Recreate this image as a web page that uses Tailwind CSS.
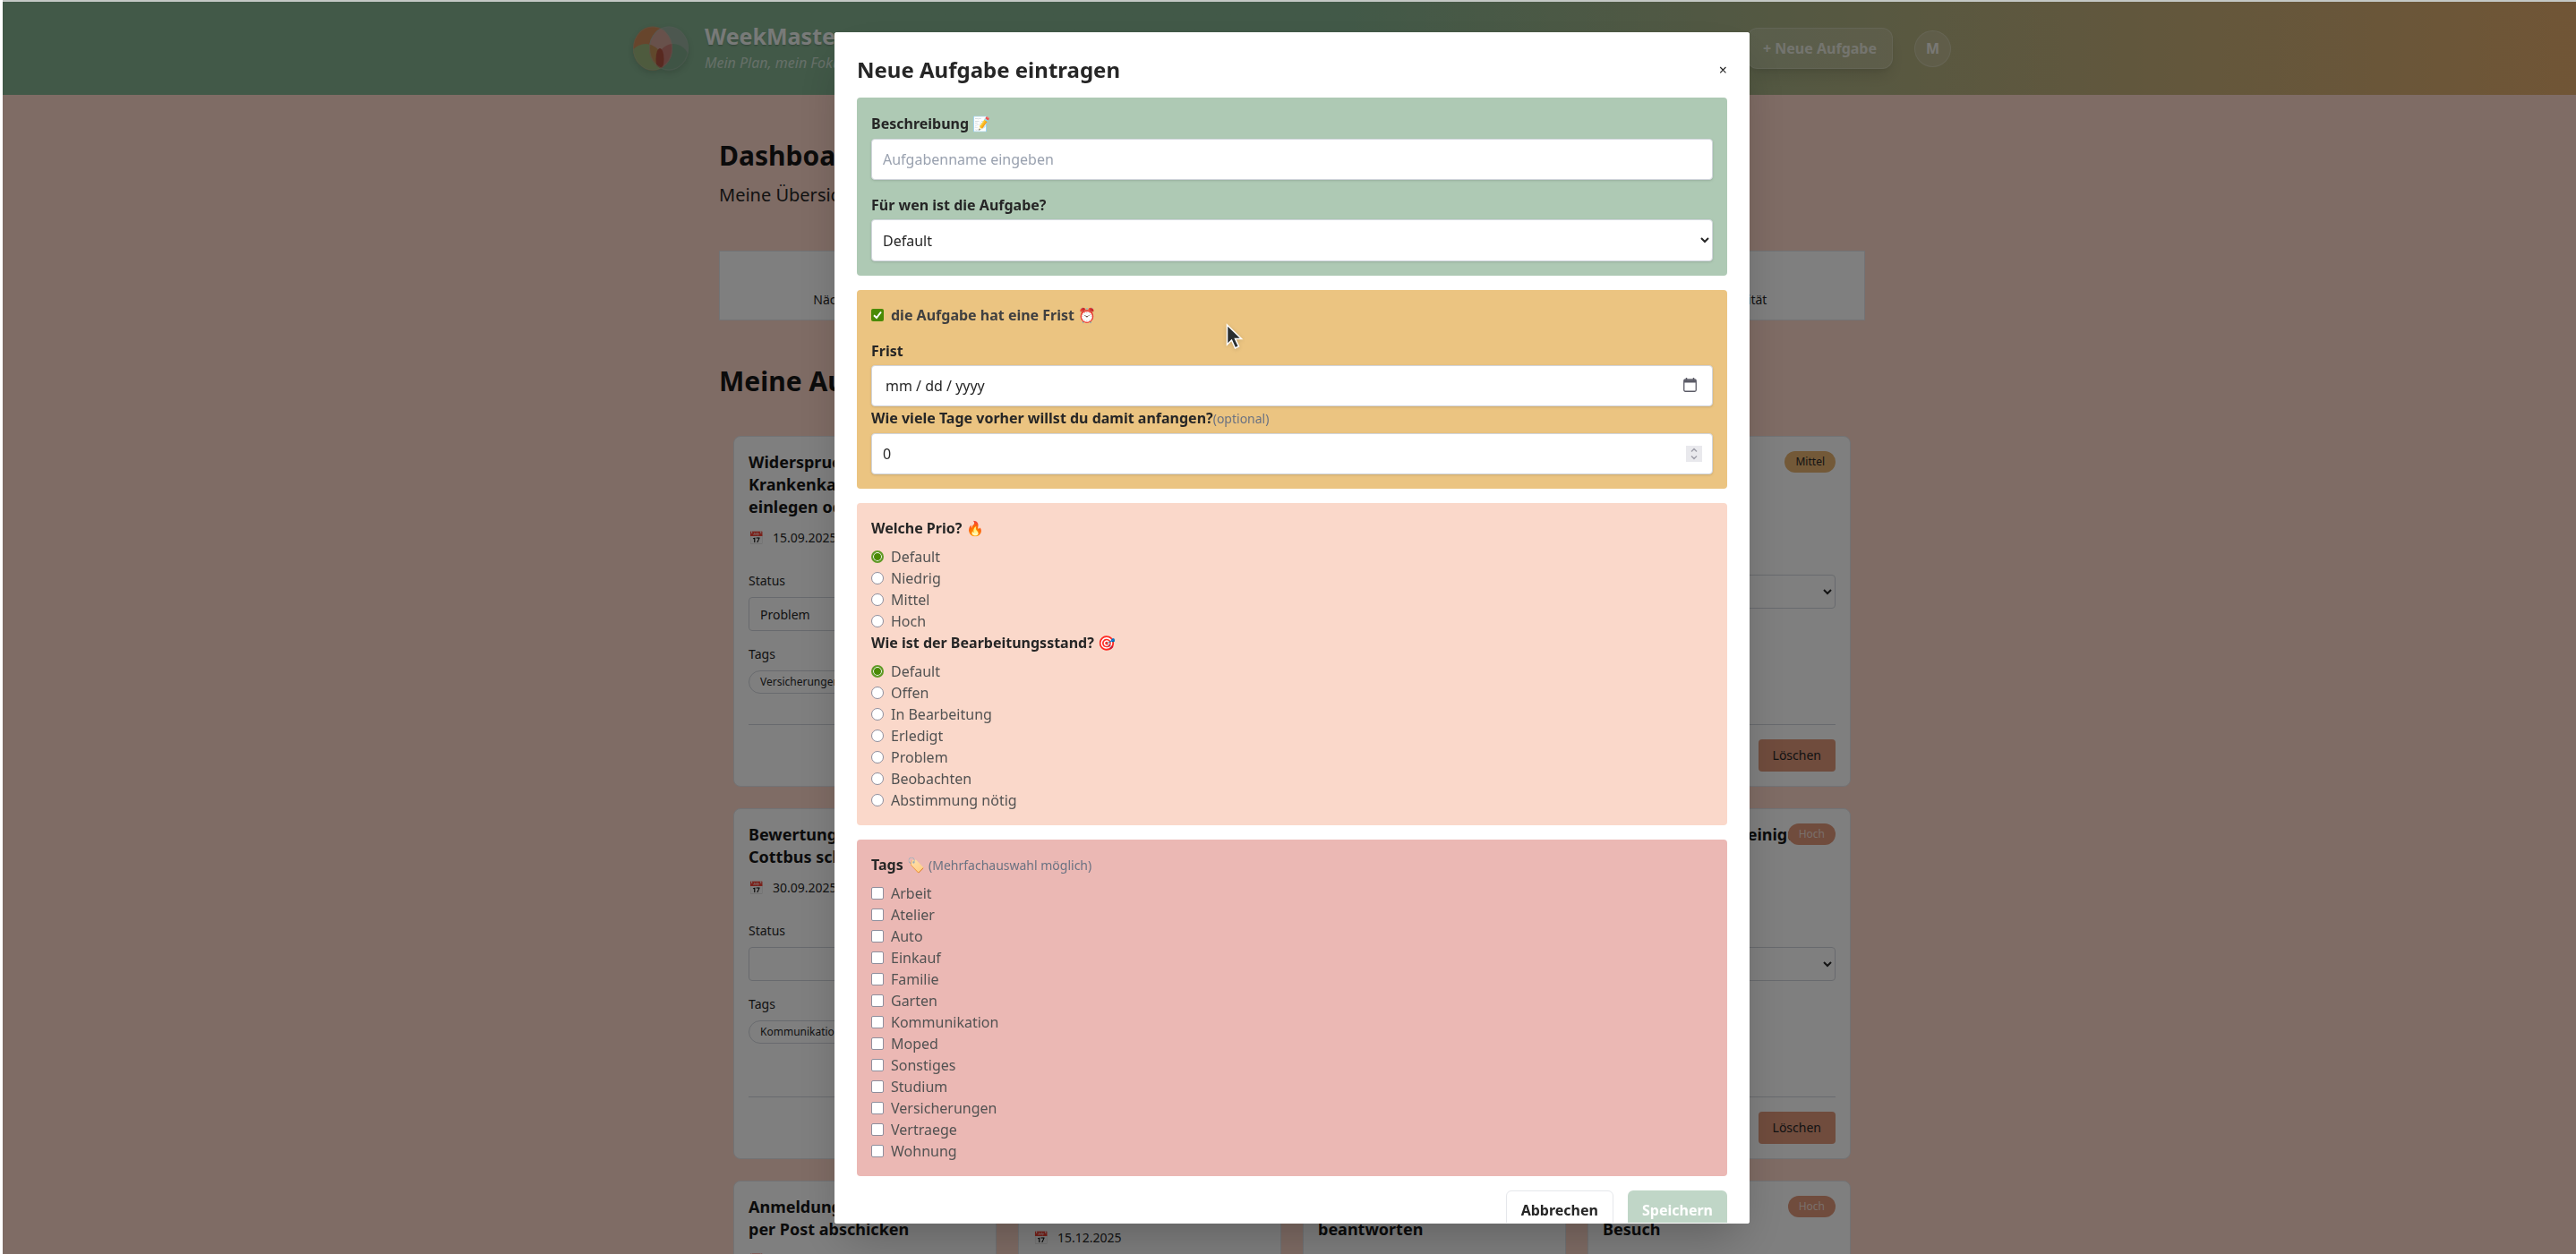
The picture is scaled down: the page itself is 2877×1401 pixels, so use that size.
<!DOCTYPE html>
<html lang="de">
<head>
<meta charset="utf-8">
<title>WeekMaster</title>
<script src="https://cdn.jsdelivr.net/npm/@tailwindcss/browser@4"></script>
</head>
<body class="h-screen overflow-hidden bg-white font-['Noto_Sans',sans-serif] text-base text-neutral-800">
<div class="ml-[3px] -mr-[6px] h-screen overflow-hidden border-t-2 border-[#c4c8c5] bg-[#fed8ca]">
  <header class="h-[104px] bg-linear-to-r from-[#84b290] from-52% to-[#e2ab6c]">
    <div class="mx-auto flex h-full max-w-[1536px] items-center justify-between px-8">
      <a href="#" class="flex items-center gap-[18px]">
        <svg class="h-[50px] w-[62px] drop-shadow-md" viewBox="0 0 62 50" aria-hidden="true">
          <defs>
            <clipPath id="l"><ellipse cx="22" cy="25" rx="22" ry="24.500"/></clipPath>
            <clipPath id="r"><ellipse cx="40" cy="25" rx="22" ry="24.500"/></clipPath>
          </defs>
          <g clip-path="url(#l)">
            <rect width="62" height="50" fill="#cf8a58"/>
            <ellipse cx="14" cy="42" rx="20" ry="22" fill="#9cb67c"/>
          </g>
          <g clip-path="url(#r)">
            <rect width="62" height="50" fill="#98ae9e"/>
            <ellipse cx="45" cy="42" rx="19" ry="22" fill="#7fa88a"/>
            <g clip-path="url(#l)">
              <rect width="62" height="50" fill="#d0a296"/>
              <ellipse cx="14" cy="42" rx="20" ry="22" fill="#c29058"/>
              <ellipse cx="45" cy="42" rx="19" ry="22" fill="#c67c74"/>
              <ellipse cx="30" cy="37" rx="4.500" ry="12" fill="#b15240"/>
            </g>
          </g>
          <ellipse cx="22" cy="25" rx="21.500" ry="24" fill="none" stroke="#a4b8a8" stroke-opacity=".4"/>
          <ellipse cx="40" cy="25" rx="21.500" ry="24" fill="none" stroke="#a4b8a8" stroke-opacity=".5"/>
        </svg>
        <span class="block">
          <span class="block text-[25px] leading-8 font-bold text-white/90 text-shadow-sm">WeekMaster</span>
          <span class="block text-base leading-7 text-white/60 italic">Mein Plan, mein Fokus</span>
        </span>
      </a>
      <div class="flex items-center gap-6">
        <button class="h-[46px] rounded-xl border border-white/20 bg-white/15 px-[17px] font-bold text-white/70 shadow-lg">+ Neue Aufgabe</button>
        <button class="size-[41px] rounded-full border border-white/20 bg-white/15 font-bold text-white/80">M</button>
      </div>
    </div>
  </header>

  <main class="mx-auto max-w-[1280px] pt-[50px]">
    <h1 class="text-3xl leading-9 font-bold text-neutral-900">Dashboard</h1>
    <p class="mt-3 text-xl leading-7">Meine Übersicht</p>
    <div class="mt-12 grid h-[78px] grid-cols-4 items-end border border-gray-200 bg-white pb-3 text-center text-sm">
      <p>Nächste Termine</p><p>Offen</p><p>In Bearbeitung</p><p>Offene Priorität</p>
    </div>
    <h2 class="mt-[50px] text-3xl leading-9 font-bold text-neutral-900">Meine Aufgaben</h2>
    <div class="mt-[27px] grid auto-rows-[392px] grid-cols-4 gap-6 p-4 text-sm leading-5">
      <article class="flex flex-col rounded-lg border border-gray-200 bg-white p-4">
        <h3 class="text-lg leading-[25px] font-bold text-neutral-900">Widerspruch bei<br>Krankenkasse<br>einlegen oder</h3>
        <p class="mt-3 flex gap-[10px]"><span>📅</span>15.09.2025</p>
        <label for="s1" class="mt-7">Status</label>
        <select id="s1" class="mt-2 h-[38px] shrink-0 rounded border border-gray-300 px-2"><option>Problem</option></select>
        <p class="mt-4">Tags</p>
        <p class="mt-2 h-[26px] self-start rounded-full border border-gray-300 px-3 text-xs leading-6">Versicherungen</p>
        <div class="mt-auto flex justify-end border-t border-gray-300 pt-4"><button class="h-9 rounded bg-[#e0987a] px-4">Löschen</button></div>
      </article>
      <article class="rounded-lg border border-gray-200 bg-white p-4"></article>
      <article class="rounded-lg border border-gray-200 bg-white p-4"></article>
      <article class="relative flex flex-col rounded-lg border border-gray-200 bg-white p-4">
        <span class="absolute top-4 right-4 h-6 rounded-full bg-[#e6b270] px-3 text-xs leading-6">Mittel</span>
        <h3 class="text-lg leading-[25px] font-bold text-neutral-900">Auto<br>Service</h3>
        <p class="mt-3">📅</p>
        <label for="s2" class="mt-7">Status</label>
        <select id="s2" class="mt-2 h-[38px] shrink-0 rounded border border-gray-300 px-2"><option></option></select>
        <div class="mt-auto flex justify-end border-t border-gray-300 pt-4"><button class="h-9 rounded bg-[#e0987a] px-4">Löschen</button></div>
      </article>

      <article class="flex flex-col rounded-lg border border-gray-200 bg-white p-4">
        <h3 class="text-lg leading-[25px] font-bold text-neutral-900">Bewertung<br>Cottbus schreiben</h3>
        <p class="mt-3 flex gap-[10px]"><span>📅</span>30.09.2025</p>
        <label for="s3" class="mt-7">Status</label>
        <select id="s3" class="mt-2 h-[38px] shrink-0 rounded border border-gray-300 px-2"><option></option></select>
        <p class="mt-4">Tags</p>
        <p class="mt-2 h-[26px] self-start rounded-full border border-gray-300 px-3 text-xs leading-6">Kommunikation</p>
        <div class="mt-auto flex justify-end border-t border-gray-300 pt-4"><button class="h-9 rounded bg-[#e0987a] px-4">Löschen</button></div>
      </article>
      <article class="rounded-lg border border-gray-200 bg-white p-4"></article>
      <article class="rounded-lg border border-gray-200 bg-white p-4"></article>
      <article class="relative flex flex-col rounded-lg border border-gray-200 bg-white p-4">
        <span class="absolute top-4 right-4 h-6 rounded-full bg-[#e0987a] px-3 text-xs leading-6 text-white/70">Hoch</span>
        <h3 class="text-lg leading-[25px] font-bold whitespace-nowrap text-neutral-900">Termine für Zahnreinigu<br>planen</h3>
        <p class="mt-3">📅</p>
        <label for="s4" class="mt-7">Status</label>
        <select id="s4" class="mt-2 h-[38px] shrink-0 rounded border border-gray-300 px-2"><option></option></select>
        <div class="mt-auto flex justify-end border-t border-gray-300 pt-4"><button class="h-9 rounded bg-[#e0987a] px-4">Löschen</button></div>
      </article>

      <article class="rounded-lg border border-gray-200 bg-white p-4">
        <h3 class="text-lg leading-[25px] font-bold text-neutral-900">Anmeldung<br>per Post abschicken</h3>
        <p class="mt-3 flex gap-[10px]"><span>📅</span></p>
      </article>
      <article class="rounded-lg border border-gray-200 bg-white p-4">
        <h3 class="text-lg leading-[25px] font-bold text-neutral-900">Steuer</h3>
        <p class="mt-3 flex gap-[10px]"><span>📅</span>15.12.2025</p>
      </article>
      <article class="rounded-lg border border-gray-200 bg-white p-4">
        <h3 class="text-lg leading-[25px] font-bold text-neutral-900">Brief<br>beantworten</h3>
      </article>
      <article class="relative rounded-lg border border-gray-200 bg-white p-4">
        <span class="absolute top-4 right-4 h-6 rounded-full bg-[#e0987a] px-3 text-xs leading-6 text-white/70">Hoch</span>
        <h3 class="text-lg leading-[25px] font-bold text-neutral-900">Arzt<br>Besuch</h3>
      </article>
    </div>
  </main>
</div>

<div class="fixed top-[2px] -right-[6px] bottom-0 left-[3px] flex items-center justify-center bg-black/50">
  <div role="dialog" aria-labelledby="dlg" class="h-[95vh] w-full max-w-[1022px] overflow-hidden rounded-xs border border-white bg-white p-6 shadow-2xl">
    <div class="mt-px flex items-center justify-between">
      <h2 id="dlg" class="text-2xl leading-8 font-bold">Neue Aufgabe eintragen</h2>
      <button aria-label="Schließen">×</button>
    </div>
    <form class="mt-[15px] flex flex-col gap-4">
      <section class="flex flex-col rounded bg-[#aec9b4] p-4">
        <label for="name" class="leading-[26px] font-bold">Beschreibung 📝</label>
        <input id="name" type="text" placeholder="Aufgabenname eingeben" class="mt-1 h-[46px] rounded border border-gray-300 bg-white px-3 shadow-sm placeholder:text-gray-400">
        <label for="who" class="mt-4 font-bold">Für wen ist die Aufgabe?</label>
        <select id="who" class="mt-1 h-[47px] rounded border border-gray-300 bg-white px-2 shadow-sm"><option>Default</option></select>
      </section>

      <section class="flex flex-col rounded bg-[#ebc481] p-4">
        <label class="relative flex items-center gap-2 font-bold text-neutral-700">
          <input type="checkbox" checked class="size-[14px] appearance-none rounded-xs bg-[#4a8a05]">
          <svg class="absolute left-0 size-[14px]" viewBox="0 0 14 14" fill="none" stroke="#fff" stroke-width="2"><path d="M3 7.300 6 10l5-6.500"/></svg>
          die Aufgabe hat eine Frist ⏰
        </label>
        <label for="date" class="mt-4 font-bold">Frist</label>
        <div class="relative mt-1 flex">
          <input id="date" type="text" placeholder="mm / dd / yyyy" class="h-[46px] w-full rounded border border-gray-300 bg-white px-[15px] shadow-sm placeholder:text-neutral-800">
          <button type="button" aria-label="Kalender" class="absolute top-[14px] right-[18px]">
            <svg class="h-4 w-[15px]" viewBox="0 0 15 16" fill="none" stroke="#5b5b66"><path d="M3.500 0v3M11.500 0v3" stroke-width="1.500"/><rect x=".75" y="2" width="13.500" height="13.250" rx="1.500" stroke-width="1.300"/><path d="M1 4h13" stroke-width="3"/></svg>
          </button>
        </div>
        <label for="days" class="mt-px font-bold">Wie viele Tage vorher willst du damit anfangen?<span class="text-sm font-normal text-gray-500">(optional)</span></label>
        <div class="relative mt-[5px] flex">
          <input id="days" type="text" inputmode="numeric" value="0" class="h-[46px] w-full rounded border border-gray-300 bg-white px-3 shadow-sm">
          <span class="absolute top-[14px] right-3 flex h-[18px] w-[18px] items-center justify-center bg-[#e9e9ed]">
            <svg class="h-[14px] w-2" viewBox="0 0 8 14" fill="none" stroke="#a0a0aa" stroke-width="1.500"><path d="M1 4.500 4 1.500l3 3M1 9.500l3 3 3-3"/></svg>
          </span>
        </div>
      </section>

      <section class="rounded bg-[#fad8ca] p-4 text-neutral-600">
        <fieldset>
          <legend class="mb-2 font-bold text-neutral-800">Welche Prio? 🔥</legend>
          <label class="flex items-center gap-2"><input type="radio" name="prio" checked class="size-[14px] appearance-none rounded-full border-2 border-[#5f9a26] bg-[#4a8a05] inset-shadow-[0_0_0_1px_#fff]">Default</label>
          <label class="flex items-center gap-2"><input type="radio" name="prio" class="size-[14px] appearance-none rounded-full border border-[#8f8f9d] bg-white">Niedrig</label>
          <label class="flex items-center gap-2"><input type="radio" name="prio" class="size-[14px] appearance-none rounded-full border border-[#8f8f9d] bg-white">Mittel</label>
          <label class="flex items-center gap-2"><input type="radio" name="prio" class="size-[14px] appearance-none rounded-full border border-[#8f8f9d] bg-white">Hoch</label>
        </fieldset>
        <fieldset>
          <legend class="mb-2 font-bold text-neutral-800">Wie ist der Bearbeitungsstand? 🎯</legend>
          <label class="flex items-center gap-2"><input type="radio" name="stand" checked class="size-[14px] appearance-none rounded-full border-2 border-[#5f9a26] bg-[#4a8a05] inset-shadow-[0_0_0_1px_#fff]">Default</label>
          <label class="flex items-center gap-2"><input type="radio" name="stand" class="size-[14px] appearance-none rounded-full border border-[#8f8f9d] bg-white">Offen</label>
          <label class="flex items-center gap-2"><input type="radio" name="stand" class="size-[14px] appearance-none rounded-full border border-[#8f8f9d] bg-white">In Bearbeitung</label>
          <label class="flex items-center gap-2"><input type="radio" name="stand" class="size-[14px] appearance-none rounded-full border border-[#8f8f9d] bg-white">Erledigt</label>
          <label class="flex items-center gap-2"><input type="radio" name="stand" class="size-[14px] appearance-none rounded-full border border-[#8f8f9d] bg-white">Problem</label>
          <label class="flex items-center gap-2"><input type="radio" name="stand" class="size-[14px] appearance-none rounded-full border border-[#8f8f9d] bg-white">Beobachten</label>
          <label class="flex items-center gap-2"><input type="radio" name="stand" class="size-[14px] appearance-none rounded-full border border-[#8f8f9d] bg-white">Abstimmung nötig</label>
        </fieldset>
      </section>

      <section class="rounded bg-[#ebb8b4] p-4 text-neutral-600">
        <fieldset>
          <legend class="mb-2 font-bold text-neutral-800">Tags 🏷️ <span class="text-sm font-normal text-gray-500">(Mehrfachauswahl möglich)</span></legend>
          <label class="flex items-center gap-2"><input type="checkbox" class="size-[14px] appearance-none rounded-xs border border-[#8f8f9d] bg-white">Arbeit</label>
          <label class="flex items-center gap-2"><input type="checkbox" class="size-[14px] appearance-none rounded-xs border border-[#8f8f9d] bg-white">Atelier</label>
          <label class="flex items-center gap-2"><input type="checkbox" class="size-[14px] appearance-none rounded-xs border border-[#8f8f9d] bg-white">Auto</label>
          <label class="flex items-center gap-2"><input type="checkbox" class="size-[14px] appearance-none rounded-xs border border-[#8f8f9d] bg-white">Einkauf</label>
          <label class="flex items-center gap-2"><input type="checkbox" class="size-[14px] appearance-none rounded-xs border border-[#8f8f9d] bg-white">Familie</label>
          <label class="flex items-center gap-2"><input type="checkbox" class="size-[14px] appearance-none rounded-xs border border-[#8f8f9d] bg-white">Garten</label>
          <label class="flex items-center gap-2"><input type="checkbox" class="size-[14px] appearance-none rounded-xs border border-[#8f8f9d] bg-white">Kommunikation</label>
          <label class="flex items-center gap-2"><input type="checkbox" class="size-[14px] appearance-none rounded-xs border border-[#8f8f9d] bg-white">Moped</label>
          <label class="flex items-center gap-2"><input type="checkbox" class="size-[14px] appearance-none rounded-xs border border-[#8f8f9d] bg-white">Sonstiges</label>
          <label class="flex items-center gap-2"><input type="checkbox" class="size-[14px] appearance-none rounded-xs border border-[#8f8f9d] bg-white">Studium</label>
          <label class="flex items-center gap-2"><input type="checkbox" class="size-[14px] appearance-none rounded-xs border border-[#8f8f9d] bg-white">Versicherungen</label>
          <label class="flex items-center gap-2"><input type="checkbox" class="size-[14px] appearance-none rounded-xs border border-[#8f8f9d] bg-white">Vertraege</label>
          <label class="flex items-center gap-2"><input type="checkbox" class="size-[14px] appearance-none rounded-xs border border-[#8f8f9d] bg-white">Wohnung</label>
        </fieldset>
      </section>

      <div class="flex justify-end gap-4">
        <button type="button" class="h-11 rounded-md border border-gray-200 px-4 font-bold">Abbrechen</button>
        <button type="submit" disabled class="h-11 rounded-md bg-[#c0d6c7] px-4 font-bold text-white">Speichern</button>
      </div>
    </form>
  </div>
</div>

<svg class="pointer-events-none absolute top-[361px] left-[1369px] h-[30px] w-5 drop-shadow-sm" viewBox="0 0 20 30" aria-hidden="true"><path d="M1.500 2v22l5-5 4 9 4-2-4-8.500h7z" fill="#2b2f30" stroke="#fff" stroke-width="1.500"/></svg>
</body>
</html>
